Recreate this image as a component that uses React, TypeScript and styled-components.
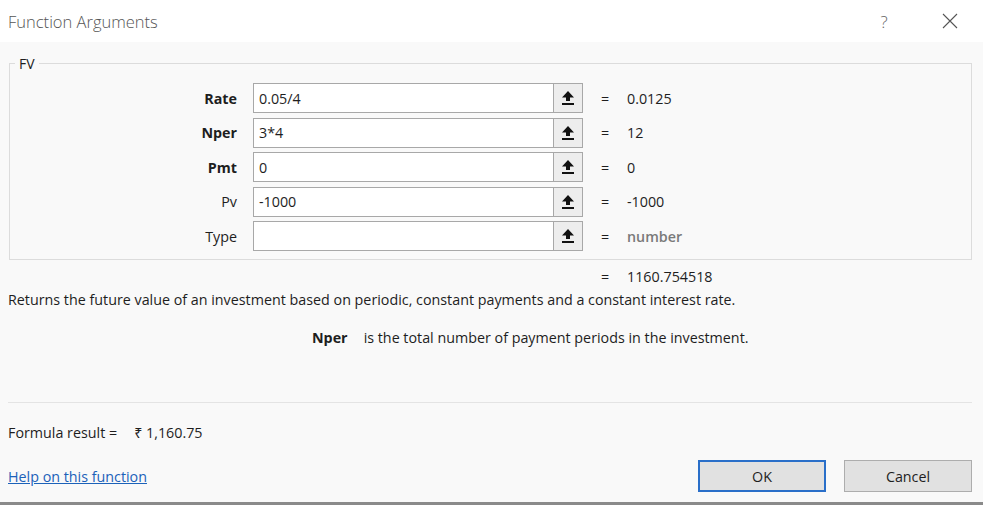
import styled, { createGlobalStyle } from "styled-components";

const GlobalStyle = createGlobalStyle`
  html, body {
    margin: 0;
    padding: 0;
    background: #f9f9f9;
  }
  body {
    font-family: "Open Sans", "Noto Sans", sans-serif;
    color: #1e1e1e;
  }
`;

const Dialog = styled.div`
  width: 983px;
  height: 505px;
  display: flex;
  flex-direction: column;
  background: #f9f9f9;
  box-sizing: border-box;
  border-bottom: 3px solid #8a8a8a;
  overflow: hidden;
`;

const TitleBar = styled.div`
  height: 42px;
  background: #ffffff;
  display: flex;
  align-items: center;
  padding: 0 0 0 8px;
  flex-shrink: 0;
`;

const Title = styled.div`
  flex: 1;
  font-size: 16.5px;
  font-weight: 300;
  color: #555;
`;

const TitleButton = styled.div`
  width: 66px;
  height: 42px;
  display: flex;
  align-items: center;
  justify-content: center;
  color: #666;
  font-size: 17px;
  font-weight: 300;
`;

const Content = styled.div`
  display: flex;
  flex-direction: column;
  padding: 12px 11px 0 9px;
  flex: 1;
`;

const Fieldset = styled.fieldset`
  margin: 0;
  padding: 10px 0 8px 0;
  border: 1px solid #dcdcdc;
  display: flex;
  flex-direction: column;
  gap: 4.5px;
`;

const Legend = styled.legend`
  margin-left: 5px;
  padding: 0 4px;
  font-size: 14px;
  color: #1e1e1e;
`;

const ArgRow = styled.div`
  display: flex;
  align-items: center;
  height: 30px;
`;

const ArgLabel = styled.div<{ $bold?: boolean }>`
  width: 227px;
  margin-right: 16px;
  text-align: right;
  font-size: 14.3px;
  font-weight: ${(p) => (p.$bold ? 700 : 400)};
`;

const ArgInput = styled.div`
  width: 300px;
  height: 30px;
  box-sizing: border-box;
  background: #fff;
  border: 1px solid #a8a8a8;
  border-right: none;
  display: flex;
  align-items: center;
  padding-left: 5px;
  font-size: 14.3px;
`;

const RefButton = styled.div`
  width: 30px;
  height: 30px;
  box-sizing: border-box;
  border: 1px solid #a8a8a8;
  background: #ededed;
  display: flex;
  align-items: center;
  justify-content: center;
`;

const Eq = styled.div`
  margin-left: 18px;
  width: 26px;
  font-size: 14.3px;
`;

const Value = styled.div<{ $muted?: boolean }>`
  font-size: 14.3px;
  color: ${(p) => (p.$muted ? "#7a7a7a" : "#1e1e1e")};
  font-weight: ${(p) => (p.$muted ? 600 : 400)};
`;

const ResultRow = styled.div`
  display: flex;
  align-items: center;
  height: 20px;
  margin-top: 6px;
  padding-left: 574px;
`;

const Description = styled.div`
  font-size: 14.3px;
  margin-top: 4px;
  margin-left: -1px;
`;

const ArgHelp = styled.div`
  display: flex;
  align-items: center;
  margin-top: 19px;
  padding-left: 303px;
  font-size: 14.3px;
`;

const HelpName = styled.span`
  font-weight: 700;
  margin-right: 16px;
`;

const Divider = styled.div`
  margin-top: 55px;
  margin-left: -1px;
  height: 1px;
  background: #e4e4e4;
`;

const FormulaResult = styled.div`
  display: flex;
  gap: 17px;
  margin-top: 20px;
  margin-left: -1px;
  font-size: 14.3px;
`;

const Footer = styled.div`
  display: flex;
  align-items: center;
  margin-top: 18px;
  margin-left: -1px;
`;

const HelpLink = styled.a`
  flex: 1;
  font-size: 14.3px;
  color: #1c62b9;
  text-decoration: underline;
`;

const Button = styled.div<{ $primary?: boolean }>`
  width: 128px;
  height: 32px;
  box-sizing: border-box;
  display: flex;
  align-items: center;
  justify-content: center;
  font-size: 14.3px;
  background: #e1e1e1;
  border: ${(p) => (p.$primary ? "2px solid #2a6fc9" : "1px solid #adadad")};
  margin-left: 18px;
`;

const UploadIcon = () => (
  <svg width="14" height="16" viewBox="0 0 14 16">
    <path d="M7 1 L13 7.5 L9 7.5 L9 11 L5 11 L5 7.5 L1 7.5 Z" fill="#111" />
    <rect x="1" y="13" width="12" height="2" fill="#111" />
  </svg>
);

const args = [
  { name: "Rate", bold: true, input: "0.05/4", value: "0.0125" },
  { name: "Nper", bold: true, input: "3*4", value: "12" },
  { name: "Pmt", bold: true, input: "0", value: "0" },
  { name: "Pv", bold: false, input: "-1000", value: "-1000" },
  { name: "Type", bold: false, input: "", value: "number", muted: true },
];

export default function App() {
  return (
    <>
      <GlobalStyle />
      <Dialog>
        <TitleBar>
          <Title>Function Arguments</Title>
          <TitleButton>?</TitleButton>
          <TitleButton>
            <svg width="16" height="16" viewBox="0 0 16 16">
              <path d="M1 1 L15 15 M15 1 L1 15" stroke="#555" strokeWidth="1.1" />
            </svg>
          </TitleButton>
        </TitleBar>
        <Content>
          <Fieldset>
            <Legend>FV</Legend>
            {args.map((a) => (
              <ArgRow key={a.name}>
                <ArgLabel $bold={a.bold}>{a.name}</ArgLabel>
                <ArgInput>{a.input}</ArgInput>
                <RefButton>
                  <UploadIcon />
                </RefButton>
                <Eq>=</Eq>
                <Value $muted={a.muted}>{a.value}</Value>
              </ArgRow>
            ))}
          </Fieldset>
          <ResultRow>
            <Eq>=</Eq>
            <Value>1160.754518</Value>
          </ResultRow>
          <Description>
            Returns the future value of an investment based on periodic, constant payments and a constant interest rate.
          </Description>
          <ArgHelp>
            <HelpName>Nper</HelpName>
            is the total number of payment periods in the investment.
          </ArgHelp>
          <Divider />
          <FormulaResult>
            <span>Formula result =</span>
            <span>₹ 1,160.75</span>
          </FormulaResult>
          <Footer>
            <HelpLink href="#">Help on this function</HelpLink>
            <Button $primary>OK</Button>
            <Button>Cancel</Button>
          </Footer>
        </Content>
      </Dialog>
    </>
  );
}
